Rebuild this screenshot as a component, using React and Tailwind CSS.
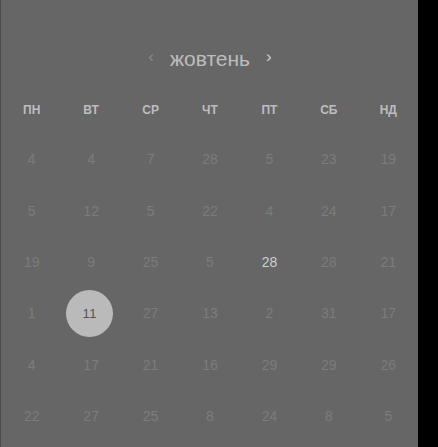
const weekdays = ['ПН', 'ВТ', 'СР', 'ЧТ', 'ПТ', 'СБ', 'НД'];

const weeks = [
  [4, 4, 7, 28, 5, 23, 19],
  [5, 12, 5, 22, 4, 24, 17],
  [19, 9, 25, 5, 28, 28, 21],
  [1, 11, 27, 13, 2, 31, 17],
  [4, 17, 21, 16, 29, 29, 26],
  [22, 27, 25, 8, 24, 8, 5],
];

// selected = week 3 / tuesday, today = week 2 / friday
const Day = ({ value, selected, today }) => {
  if (selected) {
    return (
      <div className="h-[51.4px] flex items-center justify-center">
        <div className="w-[47px] h-[47px] -ml-[3px] rounded-full bg-[#bababa] flex items-center justify-center text-[13px] text-[#555] tracking-wide">
          {value}
        </div>
      </div>
    );
  }
  return (
    <div
      className={`h-[51.4px] flex items-center justify-center text-[14px] ${
        today ? 'text-[#cfcfcf]' : 'text-[#7c7c7c]'
      }`}
    >
      {value}
    </div>
  );
};

export default function App() {
  return (
    <div className="h-[447px] w-[438px] bg-black flex font-['Liberation_Sans',Arial,sans-serif]">
      <div className="w-[418px] h-full bg-[#666666] border-l border-[#4a4a4a] pt-[44px] pl-[1px]">
        <div className="h-[28px] flex items-center justify-center">
          <span className="text-[#8a8a8a] text-[17px] mr-[16px] -mt-[3px]">‹</span>
          <span className="text-[#bdbdbd] text-[21px] leading-none">жовтень</span>
          <span className="text-[#d0d0d0] text-[17px] ml-[16px] -mt-[3px]">›</span>
        </div>

        <div className="grid grid-cols-7 mt-[28px] h-[20px] items-center">
          {weekdays.map((d) => (
            <div key={d} className="text-center text-[12px] font-bold text-[#bdbdbd]">
              {d}
            </div>
          ))}
        </div>

        <div className="mt-[14px] grid grid-cols-7">
          {weeks.map((week, wi) =>
            week.map((v, di) => (
              <Day
                key={`${wi}-${di}`}
                value={v}
                selected={wi === 3 && di === 1}
                today={wi === 2 && di === 4}
              />
            ))
          )}
        </div>
      </div>
    </div>
  );
}
